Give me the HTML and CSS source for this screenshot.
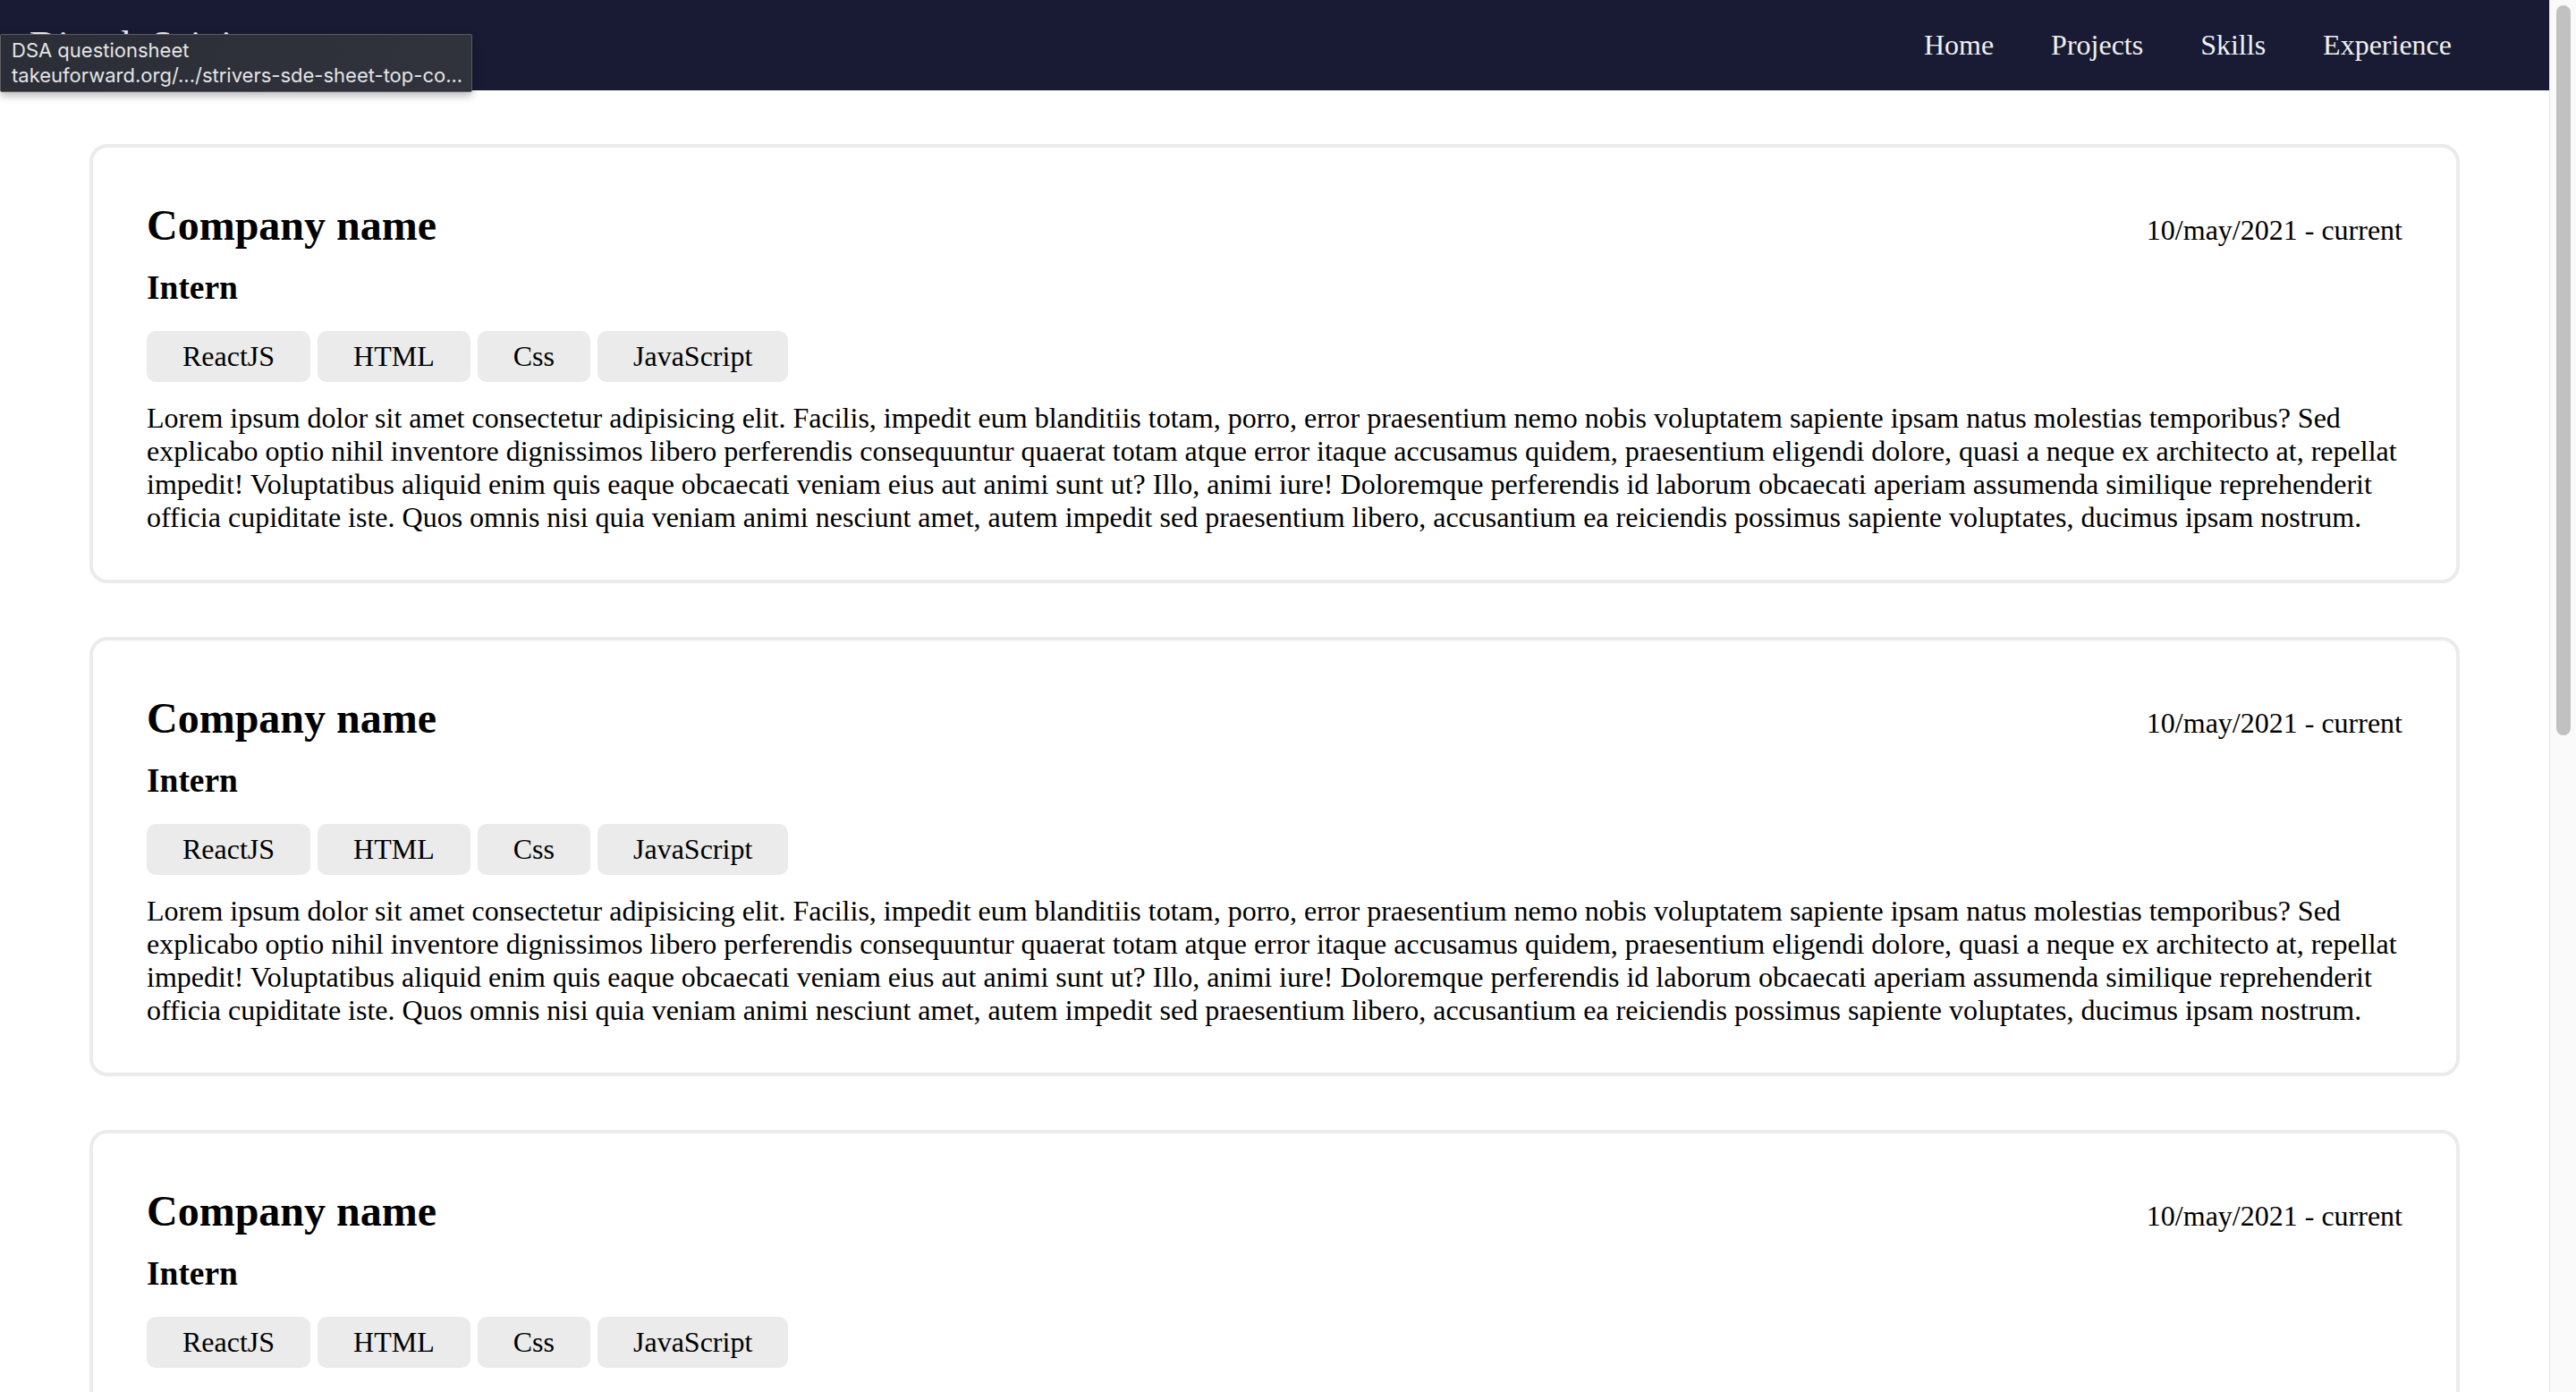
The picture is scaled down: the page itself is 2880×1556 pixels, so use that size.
FILE: index.html
```html
<!DOCTYPE html>
<html lang="en">
<head>
<meta charset="utf-8">
<title>Experience</title>
<link rel="stylesheet" href="styles.css">
</head>
<body>
<div class="page">
  <nav class="navbar">
    <div class="brand">Dinesh Saini</div>
    <ul class="nav-links">
      <li><a href="#">Home</a></li>
      <li><a href="#">Projects</a></li>
      <li><a href="#">Skills</a></li>
      <li><a href="#">Experience</a></li>
    </ul>
  </nav>
  <main class="experience">
    <section class="card">
      <div class="card-head">
        <h2 class="company">Company name</h2>
        <p class="date">10/may/2021 - current</p>
      </div>
      <h3 class="role">Intern</h3>
      <div class="tags"><span class="tag">ReactJS</span><span class="tag">HTML</span><span class="tag">Css</span><span class="tag">JavaScript</span></div>
      <p class="desc">Lorem ipsum dolor sit amet consectetur adipisicing elit. Facilis, impedit eum blanditiis totam, porro, error praesentium nemo nobis voluptatem sapiente ipsam natus molestias temporibus? Sed explicabo optio nihil inventore dignissimos libero perferendis consequuntur quaerat totam atque error itaque accusamus quidem, praesentium eligendi dolore, quasi a neque ex architecto at, repellat impedit! Voluptatibus aliquid enim quis eaque obcaecati veniam eius aut animi sunt ut? Illo, animi iure! Doloremque perferendis id laborum obcaecati aperiam assumenda similique reprehenderit officia cupiditate iste. Quos omnis nisi quia veniam animi nesciunt amet, autem impedit sed praesentium libero, accusantium ea reiciendis possimus sapiente voluptates, ducimus ipsam nostrum.</p>
    </section>
    <section class="card">
      <div class="card-head">
        <h2 class="company">Company name</h2>
        <p class="date">10/may/2021 - current</p>
      </div>
      <h3 class="role">Intern</h3>
      <div class="tags"><span class="tag">ReactJS</span><span class="tag">HTML</span><span class="tag">Css</span><span class="tag">JavaScript</span></div>
      <p class="desc">Lorem ipsum dolor sit amet consectetur adipisicing elit. Facilis, impedit eum blanditiis totam, porro, error praesentium nemo nobis voluptatem sapiente ipsam natus molestias temporibus? Sed explicabo optio nihil inventore dignissimos libero perferendis consequuntur quaerat totam atque error itaque accusamus quidem, praesentium eligendi dolore, quasi a neque ex architecto at, repellat impedit! Voluptatibus aliquid enim quis eaque obcaecati veniam eius aut animi sunt ut? Illo, animi iure! Doloremque perferendis id laborum obcaecati aperiam assumenda similique reprehenderit officia cupiditate iste. Quos omnis nisi quia veniam animi nesciunt amet, autem impedit sed praesentium libero, accusantium ea reiciendis possimus sapiente voluptates, ducimus ipsam nostrum.</p>
    </section>
    <section class="card">
      <div class="card-head">
        <h2 class="company">Company name</h2>
        <p class="date">10/may/2021 - current</p>
      </div>
      <h3 class="role">Intern</h3>
      <div class="tags"><span class="tag">ReactJS</span><span class="tag">HTML</span><span class="tag">Css</span><span class="tag">JavaScript</span></div>
      <p class="desc">Lorem ipsum dolor sit amet consectetur adipisicing elit. Facilis, impedit eum blanditiis totam, porro, error praesentium nemo nobis voluptatem sapiente ipsam natus molestias temporibus? Sed explicabo optio nihil inventore dignissimos libero perferendis consequuntur quaerat totam atque error itaque accusamus quidem, praesentium eligendi dolore, quasi a neque ex architecto at, repellat impedit! Voluptatibus aliquid enim quis eaque obcaecati veniam eius aut animi sunt ut? Illo, animi iure! Doloremque perferendis id laborum obcaecati aperiam assumenda similique reprehenderit officia cupiditate iste. Quos omnis nisi quia veniam animi nesciunt amet, autem impedit sed praesentium libero, accusantium ea reiciendis possimus sapiente voluptates, ducimus ipsam nostrum.</p>
    </section>
    <section class="card">
      <div class="card-head">
        <h2 class="company">Company name</h2>
        <p class="date">10/may/2021 - current</p>
      </div>
      <h3 class="role">Intern</h3>
      <div class="tags"><span class="tag">ReactJS</span><span class="tag">HTML</span><span class="tag">Css</span><span class="tag">JavaScript</span></div>
      <p class="desc">Lorem ipsum dolor sit amet consectetur adipisicing elit. Facilis, impedit eum blanditiis totam, porro, error praesentium nemo nobis voluptatem sapiente ipsam natus molestias temporibus? Sed explicabo optio nihil inventore dignissimos libero perferendis consequuntur quaerat totam atque error itaque accusamus quidem, praesentium eligendi dolore, quasi a neque ex architecto at, repellat impedit! Voluptatibus aliquid enim quis eaque obcaecati veniam eius aut animi sunt ut? Illo, animi iure! Doloremque perferendis id laborum obcaecati aperiam assumenda similique reprehenderit officia cupiditate iste. Quos omnis nisi quia veniam animi nesciunt amet, autem impedit sed praesentium libero, accusantium ea reiciendis possimus sapiente voluptates, ducimus ipsam nostrum.</p>
    </section>
  </main>
</div>
<div class="scrollbar"><div class="scroll-thumb"></div></div>
<div class="tooltip">
  <div class="tip-title">DSA questionsheet</div>
  <div class="tip-url">takeuforward.org/.../strivers-sde-sheet-top-co...</div>
</div>
</body>
</html>
```
FILE: styles.css
```css
html, body {
  margin: 0;
  padding: 0;
  height: 100%;
}

body {
  display: flex;
  flex-direction: row;
  overflow: hidden;
  background: #ffffff;
  font-family: "Liberation Serif", "Times New Roman", serif;
  font-size: 32px;
  color: #000000;
  position: relative;
}

.page {
  flex: 1;
  min-width: 0;
  height: 100%;
  overflow: hidden;
}

/* ---------- navbar ---------- */
.navbar {
  display: flex;
  justify-content: space-between;
  align-items: center;
  height: 101px;
  box-sizing: border-box;
  padding: 0 109px 0 33px;
  background: #191b35;
  color: #f0f0f0;
}

.brand {
  font-size: 44px;
  color: #f0f0f0;
}

.nav-links {
  display: flex;
  gap: 64px;
  list-style: none;
  margin: 0;
  padding: 0;
}

.nav-links a {
  font-size: 32px;
  color: #f0f0f0;
  text-decoration: none;
}

/* ---------- experience cards ---------- */
.experience {
  padding: 60px 100px 60px;
}

.card {
  border: 4px solid #ebebeb;
  border-radius: 20px;
  padding: 59px 60px 51px;
  margin-bottom: 60px;
}

.card-head {
  display: flex;
  justify-content: space-between;
  align-items: baseline;
}

.company {
  margin: 0;
  font-size: 48px;
  font-weight: bold;
}

.date {
  margin: 0;
  font-size: 32px;
}

.role {
  margin: 21px 0 0;
  font-size: 37.44px;
  font-weight: bold;
}

.tags {
  display: flex;
  gap: 8px;
  margin-top: 27px;
}

.tag {
  background: #ebebeb;
  border-radius: 10px;
  padding: 10px 40px;
}

.desc {
  margin: 22px 0 0;
}

/* ---------- scrollbar ---------- */
.scrollbar {
  width: 30px;
  flex: 0 0 30px;
  height: 100%;
  box-sizing: border-box;
  background: #fafafa;
  border-left: 1px solid #e6e6e6;
  padding: 6px 6px 0 7px;
}

.scroll-thumb {
  height: 816px;
  background: #c1c1c1;
  border-radius: 8px;
}

/* ---------- browser link tooltip ---------- */
.tooltip {
  position: absolute;
  left: 0;
  top: 38px;
  width: 528px;
  box-sizing: border-box;
  padding: 3px 10px 4px 12px;
  background: linear-gradient(90deg, #2b2d37, #30323c);
  border: 1px solid #5d5e63;
  border-radius: 2px;
  box-shadow: 0 4px 10px rgba(0, 0, 0, 0.28);
  color: #e4e4e6;
  font-family: Inter, "Liberation Sans", sans-serif;
  font-size: 22px;
  line-height: 28px;
  white-space: nowrap;
  overflow: hidden;
}
```
